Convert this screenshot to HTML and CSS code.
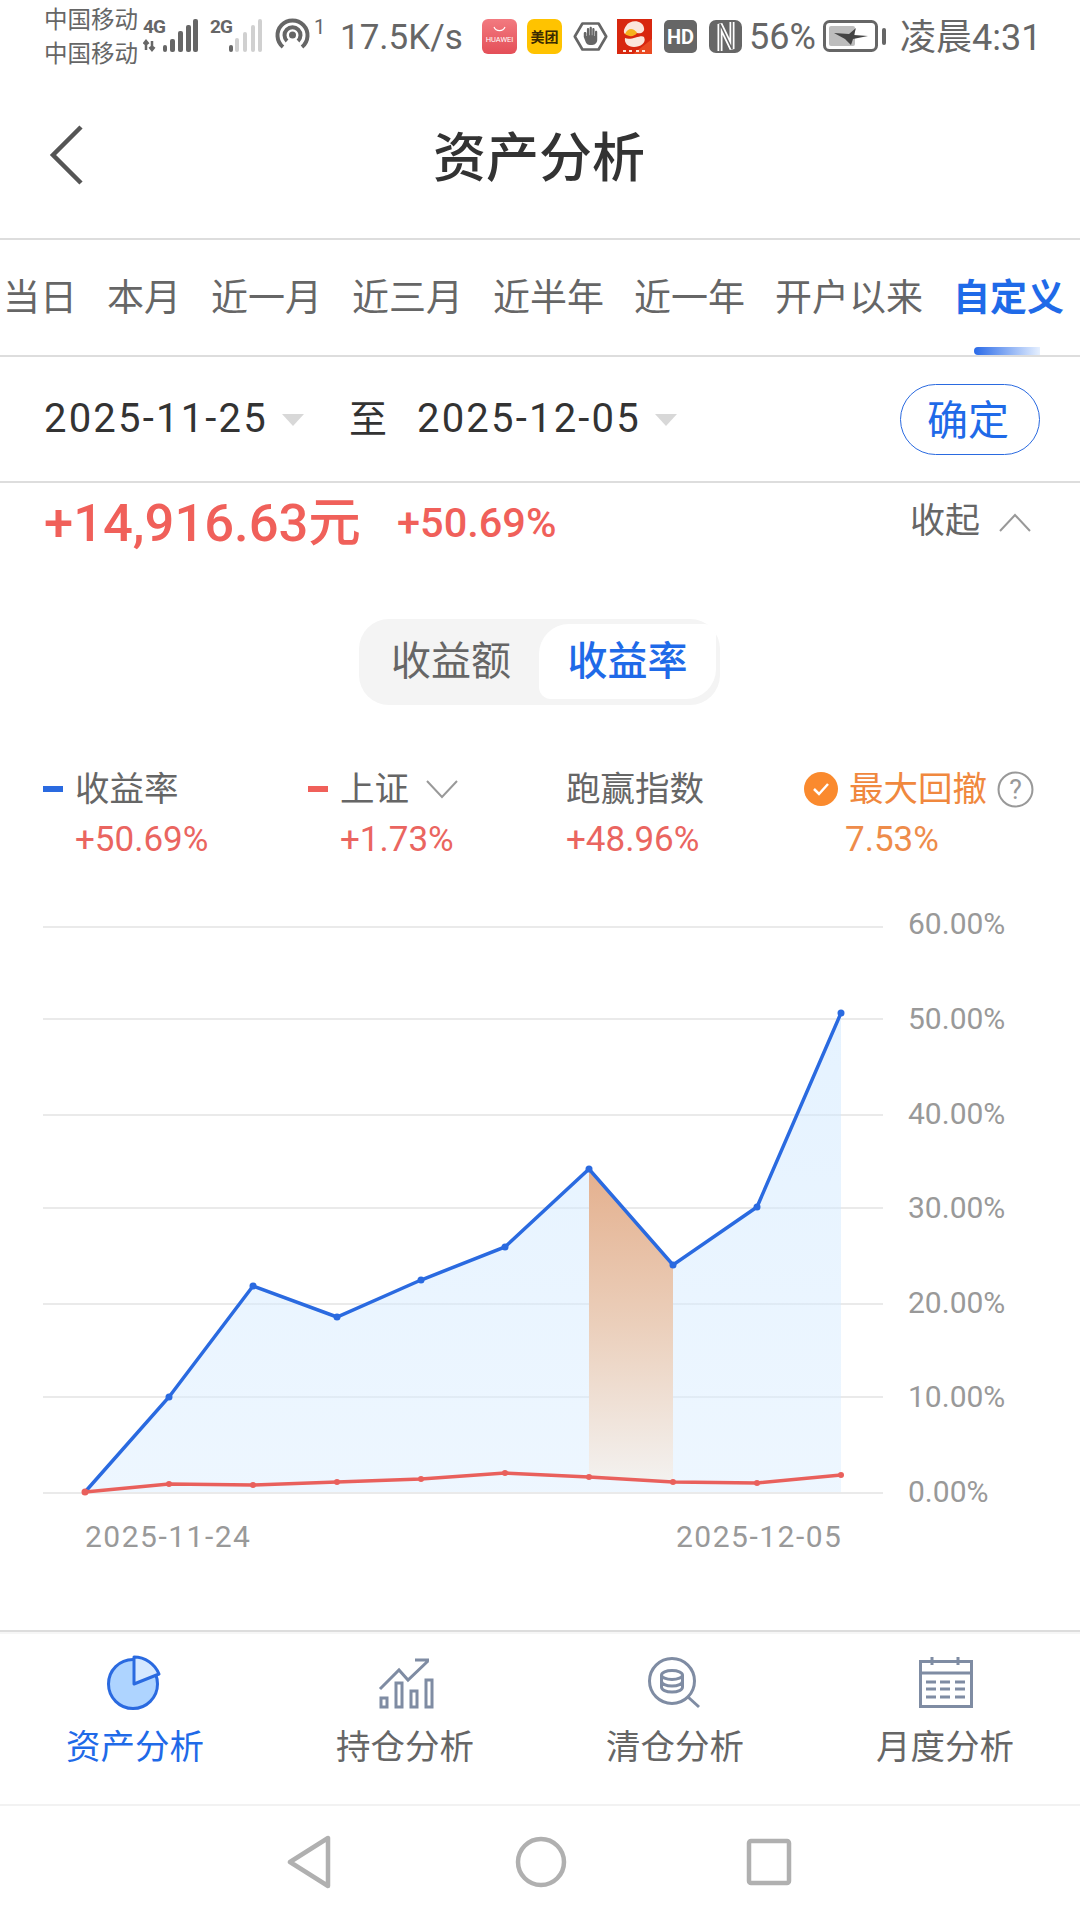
FILE: index.html
```html
<!DOCTYPE html>
<html lang="zh-CN">
<head>
    <meta charset="UTF-8">
    <meta name="viewport" content="width=device-width, initial-scale=1.0">
    <title>资产分析</title>
    <link rel="stylesheet" href="styles.css">
</head>
<body>
    <div class="page">
        <!-- status bar -->
        <div class="status-bar">
            <div class="carrier">
                <span>中国移动</span>
                <span>中国移动</span>
            </div>
            <svg class="signal" width="125" height="40" viewBox="0 0 125 40">
                <text class="net-label" x="0" y="18">4G</text>
                <path class="net-arrow" d="M3 35V26M0.500 29L3 26L5.500 29M9 26V35M6.500 32L9 35L11.500 32"/>
                <rect class="bar-on" x="20" y="30" width="4" height="7" rx="2"/>
                <rect class="bar-on" x="27" y="24" width="5" height="13" rx="2"/>
                <rect class="bar-on" x="35" y="16" width="5" height="21" rx="2"/>
                <rect class="bar-on" x="43" y="10" width="5" height="27" rx="2"/>
                <rect class="bar-on" x="50" y="4" width="5" height="33" rx="2"/>
                <text class="net-label" x="67" y="18">2G</text>
                <rect class="bar-on" x="86" y="30" width="4" height="7" rx="2"/>
                <rect class="bar-off" x="92" y="23" width="4" height="14" rx="2"/>
                <rect class="bar-off" x="100" y="17" width="4" height="20" rx="2"/>
                <rect class="bar-off" x="108" y="10" width="4" height="27" rx="2"/>
                <rect class="bar-off" x="115" y="4" width="4" height="33" rx="2"/>
            </svg>
            <svg class="hotspot" width="50" height="40" viewBox="0 0 50 40">
                <path class="hotspot-arc" d="M8 32A15 15 0 1 1 27 32"/>
                <path class="hotspot-arc" d="M12 26A8 8 0 1 1 23 26"/>
                <circle class="hotspot-dot" cx="17.500" cy="20" r="3.500"/>
                <text class="hotspot-num" x="39" y="19">1</text>
            </svg>
            <span class="speed">17.5K/s</span>
            <svg class="app-icon" width="35" height="35" viewBox="0 0 35 35">
                <defs>
                    <linearGradient id="huaweiBg" x1="0" y1="0" x2="0" y2="1">
                        <stop offset="0" stop-color="#f27a80"/>
                        <stop offset="1" stop-color="#e44f58"/>
                    </linearGradient>
                </defs>
                <rect width="35" height="35" rx="6" fill="url(#huaweiBg)"/>
                <path d="M12 8A6 6 0 0 0 23 8" fill="none" stroke="#fff" stroke-width="1.200"/>
                <text class="huawei-label" x="17.500" y="23">HUAWEI</text>
            </svg>
            <svg class="app-icon gap-10" width="35" height="35" viewBox="0 0 35 35">
                <rect width="35" height="35" rx="7" fill="#ffc300"/>
                <text class="meituan-label" x="17.500" y="23">美团</text>
            </svg>
            <svg class="app-icon gap-11" width="35" height="35" viewBox="0 0 39 39">
                <path d="M10.500 5H28.500L37 19.500L28.500 34H10.500L2 19.500Z" fill="none" stroke="#666" stroke-width="3" stroke-linejoin="round"/>
                <path d="M12 16C12 14 15 14 15 16V19H15.500V11.500C15.500 9.500 18 9.500 18 11.500V18H18.500V10C18.500 8 21 8 21 10V18H21.500V11.500C21.500 9.500 24 9.500 24 11.500V19H24.500V14.500C24.500 12.500 27 12.500 27 14.500V23C27 27 24 29 20 29C16 29 14.500 27.500 13.500 24L12 20Z" fill="#666"/>
            </svg>
            <svg class="app-icon gap-9" width="35" height="35" viewBox="0 0 35 35">
                <rect width="35" height="35" fill="#d8270f"/>
                <path d="M35 20L16 35H35Z" fill="#ea4a22"/>
                <path d="M9 7C13 0 26 1 27 9C28 13 24 15 20 14C15 12 12 15 8 15C6 13 7 10 9 7Z" fill="#fbe6dc"/>
                <path d="M8 19C14 22 24 15 27 18C30 24 23 28 17 28C11 28 7 24 8 19Z" fill="#fbe6dc"/>
                <path d="M8 15C11 8 17 9 20 14C17 18 12 18 8 15Z" fill="#f6b21e"/>
                <path class="red-ticks" d="M6 32H9M12 32H15M19 32H22M25 32H28"/>
            </svg>
            <svg class="app-icon gap-12" width="33" height="33" viewBox="0 0 33 33">
                <rect width="33" height="33" rx="5" fill="#666"/>
                <text class="hd-label" x="16.500" y="24">HD</text>
            </svg>
            <svg class="app-icon gap-12" width="33" height="33" viewBox="0 0 33 33">
                <rect width="33" height="33" rx="7" fill="#666"/>
                <path d="M11 31V4L23 29V2" fill="none" stroke="#fff" stroke-width="5"/>
                <path d="M11 31V4L23 29V2" fill="none" stroke="#666" stroke-width="1.500"/>
            </svg>
            <span class="battery-pct">56%</span>
            <svg class="battery" width="63" height="34" viewBox="0 0 63 34">
                <rect x="1.500" y="2.500" width="52" height="29" rx="5" fill="none" stroke="#666" stroke-width="3"/>
                <rect x="6" y="7" width="26" height="20" rx="2" fill="#bdbdbd"/>
                <path d="M11 14L26 15L33 9L31 16L45 17L30 20L28 26L22 20Z" fill="#444"/>
                <rect x="59" y="9" width="4" height="17" rx="2" fill="#666"/>
            </svg>
            <span class="clock">凌晨4:31</span>
        </div>

        <!-- title -->
        <header class="app-header">
            <svg class="back-icon" width="36" height="60" viewBox="0 0 36 60">
                <path d="M32 2L4 30L32 58" fill="none" stroke="#555" stroke-width="4.500"/>
            </svg>
            <h1>资产分析</h1>
        </header>

        <!-- period tabs -->
        <nav class="period-tabs">
            <span>当日</span>
            <span>本月</span>
            <span>近一月</span>
            <span>近三月</span>
            <span>近半年</span>
            <span>近一年</span>
            <span>开户以来</span>
            <span class="active">自定义</span>
        </nav>

        <!-- date range -->
        <div class="date-range">
            <span class="date">2025-11-25</span>
            <i class="caret"></i>
            <span class="date-to">至</span>
            <span class="date">2025-12-05</span>
            <i class="caret"></i>
            <button class="confirm-btn">确定</button>
        </div>

        <!-- profit summary -->
        <div class="summary">
            <span class="amount">+14,916.63元</span>
            <span class="rate">+50.69%</span>
            <span class="collapse">收起</span>
            <svg class="collapse-icon" width="32" height="20" viewBox="0 0 32 20">
                <path d="M1 18L16 2L31 18" fill="none" stroke="#999" stroke-width="2"/>
            </svg>
        </div>

        <div class="segment">
            <span class="segment-item">收益额</span>
            <span class="segment-item active">收益率</span>
        </div>

        <!-- legend -->
        <div class="legend">
            <div class="legend-cell">
                <div class="legend-name"><i class="dash dash-blue"></i>收益率</div>
                <div class="legend-value indent-32">+50.69%</div>
            </div>
            <div class="legend-cell">
                <div class="legend-name"><i class="dash dash-red"></i>上证
                    <svg class="legend-arrow" width="32" height="20" viewBox="0 0 32 20">
                        <path d="M1 2L16 18L31 2" fill="none" stroke="#999" stroke-width="2"/>
                    </svg>
                </div>
                <div class="legend-value indent-32">+1.73%</div>
            </div>
            <div class="legend-cell">
                <div class="legend-name">跑赢指数</div>
                <div class="legend-value">+48.96%</div>
            </div>
            <div class="legend-cell">
                <div class="legend-name orange">
                    <svg class="check-icon" width="34" height="34" viewBox="0 0 34 34">
                        <circle cx="17" cy="17" r="17" fill="#fa8a2e"/>
                        <path d="M10 17L15 22L24 12" fill="none" stroke="#fff" stroke-width="2.500"/>
                    </svg>
                    最大回撤
                    <svg class="help-icon" width="37" height="37" viewBox="0 0 36 36">
                        <circle cx="18" cy="18" r="16.500" fill="none" stroke="#999" stroke-width="2"/>
                        <text class="help-mark" x="18" y="27">?</text>
                    </svg>
                </div>
                <div class="legend-value orange indent-41">7.53%</div>
            </div>
        </div>

        <!-- chart, drawn in page coordinates -->
        <svg class="chart" width="1080" height="730" viewBox="0 900 1080 730">
            <defs>
                <linearGradient id="areaFill" x1="0" y1="0" x2="0" y2="1">
                    <stop offset="0" stop-color="#cbe6ff" stop-opacity="0.5"/>
                    <stop offset="1" stop-color="#dceeff" stop-opacity="0.5"/>
                </linearGradient>
                <linearGradient id="drawdownFill" x1="0" y1="0" x2="0" y2="1">
                    <stop offset="0" stop-color="#e4b08e"/>
                    <stop offset="0.5" stop-color="#ebcfbb"/>
                    <stop offset="1" stop-color="#f3f1ef"/>
                </linearGradient>
            </defs>
            <g class="grid">
                <path d="M43 927H883"/>
                <path d="M43 1019H883"/>
                <path d="M43 1115H883"/>
                <path d="M43 1208H883"/>
                <path d="M43 1304H883"/>
                <path d="M43 1397H883"/>
                <path d="M43 1493H883"/>
            </g>
            <polygon fill="url(#areaFill)" points="85,1492 169,1397 253,1286 337,1317 421,1280 505,1247 589,1169 673,1265 757,1207 841,1013 841,1492"/>
            <polygon fill="url(#drawdownFill)" points="589,1169 673,1265 673,1480 589,1478"/>
            <polyline class="line-blue" points="85,1492 169,1397 253,1286 337,1317 421,1280 505,1247 589,1169 673,1265 757,1207 841,1013"/>
            <g class="dots-blue">
                <circle cx="169" cy="1397" r="3.500"/>
                <circle cx="253" cy="1286" r="3.500"/>
                <circle cx="337" cy="1317" r="3.500"/>
                <circle cx="421" cy="1280" r="3.500"/>
                <circle cx="505" cy="1247" r="3.500"/>
                <circle cx="589" cy="1169" r="3.500"/>
                <circle cx="673" cy="1265" r="3.500"/>
                <circle cx="757" cy="1207" r="3.500"/>
                <circle cx="841" cy="1013" r="3.500"/>
            </g>
            <polyline class="line-red" points="85,1492 169,1484 253,1485 337,1482 421,1479 505,1473 589,1477 673,1482 757,1483 841,1475"/>
            <g class="dots-red">
                <circle cx="85" cy="1492" r="3.500"/>
                <circle cx="169" cy="1484" r="3"/>
                <circle cx="253" cy="1485" r="3"/>
                <circle cx="337" cy="1482" r="3"/>
                <circle cx="421" cy="1479" r="3"/>
                <circle cx="505" cy="1473" r="3"/>
                <circle cx="589" cy="1477" r="3"/>
                <circle cx="673" cy="1482" r="3"/>
                <circle cx="757" cy="1483" r="3"/>
                <circle cx="841" cy="1475" r="3"/>
            </g>
            <g class="axis-label">
                <text x="908" y="934">60.00%</text>
                <text x="908" y="1029">50.00%</text>
                <text x="908" y="1124">40.00%</text>
                <text x="908" y="1218">30.00%</text>
                <text x="908" y="1313">20.00%</text>
                <text x="908" y="1407">10.00%</text>
                <text x="908" y="1502">0.00%</text>
                <text class="axis-date" x="85" y="1547">2025-11-24</text>
                <text class="axis-date" x="676" y="1547">2025-12-05</text>
            </g>
        </svg>

        <!-- bottom tabs -->
        <div class="tab-bar">
            <div class="tab-item active">
                <svg width="60" height="60" viewBox="0 0 60 60">
                    <circle cx="28" cy="31" r="24.500" fill="#aed4ff" stroke="#2a6ae0" stroke-width="3"/>
                    <path d="M29 31V4A27 27 0 0 1 54 21Z" fill="#d5e8ff" stroke="#2a6ae0" stroke-width="3" stroke-linejoin="round"/>
                </svg>
                <span>资产分析</span>
            </div>
            <div class="tab-item">
                <svg class="tab-icon" width="60" height="60" viewBox="0 0 60 60">
                    <rect x="6" y="45" width="6" height="9"/>
                    <rect x="21" y="30" width="6" height="24"/>
                    <rect x="36" y="38" width="6" height="16"/>
                    <rect x="51" y="27" width="6" height="27"/>
                    <path d="M5 36L24 17L33 27L53 8M40 7H54"/>
                </svg>
                <span>持仓分析</span>
            </div>
            <div class="tab-item">
                <svg class="tab-icon" width="60" height="60" viewBox="0 0 60 60">
                    <circle cx="27" cy="28" r="22.500"/>
                    <path d="M43 44L54 54"/>
                    <ellipse cx="27" cy="22" rx="10.500" ry="4.500"/>
                    <path d="M16.500 22V34C16.500 37 21 39 27 39C33 39 37.500 37 37.500 34V22M16.500 28C16.500 31 21 33 27 33C33 33 37.500 31 37.500 28"/>
                </svg>
                <span>清仓分析</span>
            </div>
            <div class="tab-item">
                <svg class="tab-icon" width="60" height="60" viewBox="0 0 60 60">
                    <rect x="5.500" y="8.500" width="51" height="45"/>
                    <path d="M5 20H57M17 4V12M43 4V12"/>
                    <path d="M11 29H21M25 29H35M40 29H50M11 36H21M25 36H35M40 36H50M11 44H21M25 44H35M40 44H50"/>
                </svg>
                <span>月度分析</span>
            </div>
        </div>

        <!-- system navigation -->
        <div class="system-nav">
            <svg width="46" height="54" viewBox="0 0 46 54">
                <path d="M42 3V51L4 27Z" fill="none" stroke="#b0b0b0" stroke-width="4.500" stroke-linejoin="round"/>
            </svg>
            <svg width="54" height="54" viewBox="0 0 54 54">
                <circle cx="27" cy="27" r="23" fill="none" stroke="#b0b0b0" stroke-width="4.500"/>
            </svg>
            <svg width="48" height="50" viewBox="0 0 48 50">
                <rect x="4" y="4" width="40" height="42" rx="2" fill="none" stroke="#b0b0b0" stroke-width="4.500"/>
            </svg>
        </div>
    </div>
</body>
</html>
```

FILE: styles.css
```css
* {
    box-sizing: border-box;
}

body {
    margin: 0;
    background-color: #fff;
    font-family: Roboto, "Noto Sans CJK SC", sans-serif;
    color: #666;
}

.page {
    width: 1080px;
    height: 1920px;
    overflow: hidden;
    display: flex;
    flex-direction: column;
}

/* status bar */
.status-bar {
    height: 72px;
    padding-left: 44px;
    display: flex;
    align-items: center;
    flex-shrink: 0;
}

.carrier {
    width: 93px;
    margin-top: 3px;
    display: flex;
    flex-direction: column;
    font-size: 23.500px;
    line-height: 33.500px;
    white-space: nowrap;
    color: #666;
}

.signal {
    margin-left: 6px;
    margin-top: -3px;
}

.net-label {
    font-size: 19px;
    font-weight: 700;
    letter-spacing: -1px;
    fill: #666;
}

.net-arrow {
    fill: none;
    stroke: #666;
    stroke-width: 2.500;
}

.bar-on {
    fill: #666;
}

.bar-off {
    fill: #d0d0d0;
}

.hotspot {
    margin-left: 7px;
    margin-top: -2px;
}

.hotspot-arc {
    fill: none;
    stroke: #666;
    stroke-width: 4;
}

.hotspot-dot {
    fill: #666;
}

.hotspot-num {
    font-size: 20px;
    fill: #666;
}

.speed {
    width: 142px;
    margin-left: 15px;
    margin-top: 3px;
    font-size: 35px;
    line-height: 40px;
    white-space: nowrap;
}

.app-icon {
    flex-shrink: 0;
}

.gap-9 {
    margin-left: 9px;
}

.gap-10 {
    margin-left: 10px;
}

.gap-11 {
    margin-left: 11px;
}

.gap-12 {
    margin-left: 12px;
}

.huawei-label {
    font-size: 7.500px;
    fill: #fff;
    text-anchor: middle;
}

.meituan-label {
    font-size: 14px;
    font-weight: 700;
    fill: #3a2a00;
    text-anchor: middle;
}

.hd-label {
    font-size: 20px;
    font-weight: 700;
    fill: #fff;
    text-anchor: middle;
}

.red-ticks {
    fill: none;
    stroke: #fbe6dc;
    stroke-width: 2;
}

.battery-pct {
    width: 68px;
    margin-left: 7px;
    margin-top: 2px;
    font-size: 36px;
    line-height: 40px;
}

.battery {
    margin-left: 6px;
}

.clock {
    margin-left: 14px;
    margin-top: 4px;
    font-size: 36px;
    line-height: 40px;
    white-space: nowrap;
}

/* title */
.app-header {
    height: 168px;
    padding-left: 49px;
    display: flex;
    align-items: center;
    border-bottom: 2px solid #ddd;
    flex-shrink: 0;
}

.app-header h1 {
    margin: 7px 0 0 348px;
    font-size: 53px;
    font-weight: 500;
    line-height: 70px;
    color: #333;
}

/* period tabs */
.period-tabs {
    height: 117px;
    padding: 2px 0 0 3px;
    display: flex;
    align-items: center;
    gap: 30px;
    position: relative;
    border-bottom: 2px solid #ddd;
    font-size: 37px;
    line-height: 50px;
    white-space: nowrap;
    flex-shrink: 0;
}

.period-tabs .active {
    font-weight: 700;
    color: #1f6ae8;
}

.period-tabs .active::after {
    content: "";
    position: absolute;
    right: 40px;
    bottom: 0;
    width: 66px;
    height: 8px;
    border-radius: 4px 0 0 4px;
    background: linear-gradient(to right, #2a6ae8, #e6f0ff);
}

/* date range */
.date-range {
    height: 126px;
    padding: 0 40px 0 44px;
    display: flex;
    align-items: center;
    border-bottom: 2px solid #ddd;
    flex-shrink: 0;
}

.date {
    font-size: 40px;
    line-height: 50px;
    letter-spacing: 2.200px;
    color: #333;
}

.caret {
    width: 0;
    height: 0;
    margin-left: 14px;
    margin-top: 2px;
    border-left: 11px solid transparent;
    border-right: 11px solid transparent;
    border-top: 12px solid #d8d8d8;
}

.date-to {
    margin-left: 45px;
    margin-right: 30px;
    font-size: 38px;
    line-height: 50px;
    color: #333;
}

.confirm-btn {
    width: 140px;
    height: 71px;
    margin-left: auto;
    padding: 3px 4px 0 0;
    border: 1.500px solid #2a6ae0;
    border-radius: 36px;
    background: #fff;
    color: #1f6ae8;
    font-family: inherit;
    font-size: 41px;
    line-height: 50px;
}

/* profit summary */
.summary {
    height: 80px;
    padding-left: 44px;
    display: flex;
    align-items: center;
    flex-shrink: 0;
}

.amount {
    width: 353px;
    font-size: 52.500px;
    font-weight: 500;
    line-height: 60px;
    color: #f0605a;
    white-space: nowrap;
}

.rate {
    font-size: 41.500px;
    font-weight: 500;
    line-height: 50px;
    color: #f0605a;
}

.collapse {
    margin-left: auto;
    margin-top: -3px;
    font-size: 35px;
    line-height: 50px;
}

.collapse-icon {
    margin-left: 19px;
    margin-right: 49px;
}

.segment {
    width: 361px;
    height: 86px;
    margin: 56px 0 0 359px;
    padding: 5px 4px 6px 0;
    display: flex;
    border-radius: 30px;
    background-color: #f4f4f4;
    flex-shrink: 0;
}

.segment-item {
    width: 180px;
    padding: 0 0 8px 4px;
    display: flex;
    align-items: center;
    justify-content: center;
    font-size: 40px;
}

.segment-item.active {
    width: 177px;
    padding-left: 0;
    border-radius: 30px 12px 30px 12px;
    background-color: #fff;
    color: #1f6ae8;
    font-weight: 500;
}

/* legend */
.legend {
    margin-top: 64px;
    padding-left: 43px;
    display: grid;
    grid-template-columns: 265px 258px 238px auto;
    flex-shrink: 0;
}

.legend-name {
    height: 40px;
    display: flex;
    align-items: center;
    font-size: 34.500px;
    line-height: 40px;
    white-space: nowrap;
}

.legend-value {
    margin-top: 11px;
    font-size: 35px;
    line-height: 40px;
    color: #ea6560;
}

.legend-name.orange {
    color: #f0883e;
}

.legend-value.orange {
    color: #ee8c4a;
}

.indent-32 {
    padding-left: 32px;
}

.indent-41 {
    padding-left: 41px;
}

.dash {
    width: 20px;
    height: 6px;
    margin-right: 12px;
}

.dash-blue {
    background-color: #2a6ae0;
}

.dash-red {
    background-color: #f0605a;
}

.legend-arrow {
    margin-left: 17px;
}

.check-icon {
    margin-right: 11px;
}

.help-icon {
    margin-left: 10px;
}

.help-mark {
    font-size: 26px;
    fill: #999;
    text-anchor: middle;
}

/* chart */
.chart {
    display: block;
    margin-top: 40px;
    flex-shrink: 0;
}

.grid path {
    stroke: #e3e3e3;
    stroke-width: 1.500;
    fill: none;
}

.line-blue {
    fill: none;
    stroke: #2a6ae0;
    stroke-width: 3.500;
}

.line-red {
    fill: none;
    stroke: #e9605c;
    stroke-width: 3.500;
}

.dots-blue circle {
    fill: #2a6ae0;
}

.dots-red circle {
    fill: #e9605c;
}

.axis-label text {
    font-size: 30px;
    fill: #999;
}

.axis-label .axis-date {
    letter-spacing: 1.500px;
}

/* bottom tabs */
.tab-bar {
    height: 176px;
    padding-top: 21px;
    display: grid;
    grid-template-columns: repeat(4, 1fr);
    border-top: 2px solid #ddd;
    box-shadow: inset 0 2px 0 #f6f6f6;
    border-bottom: 2px solid #f2f2f2;
    flex-shrink: 0;
}

.tab-item {
    display: flex;
    flex-direction: column;
    align-items: center;
    gap: 14px;
    font-size: 34.500px;
    line-height: 40px;
}

.tab-item.active {
    color: #1f6ae8;
}

.tab-icon rect,
.tab-icon circle,
.tab-icon ellipse,
.tab-icon path {
    fill: none;
    stroke: #7f8ca3;
    stroke-width: 3;
}

/* system navigation */
.system-nav {
    height: 112px;
    display: flex;
    align-items: center;
}

.system-nav svg:nth-child(1) {
    margin-left: 286px;
}

.system-nav svg:nth-child(2) {
    margin-left: 182px;
}

.system-nav svg:nth-child(3) {
    margin-left: 177px;
}
```
